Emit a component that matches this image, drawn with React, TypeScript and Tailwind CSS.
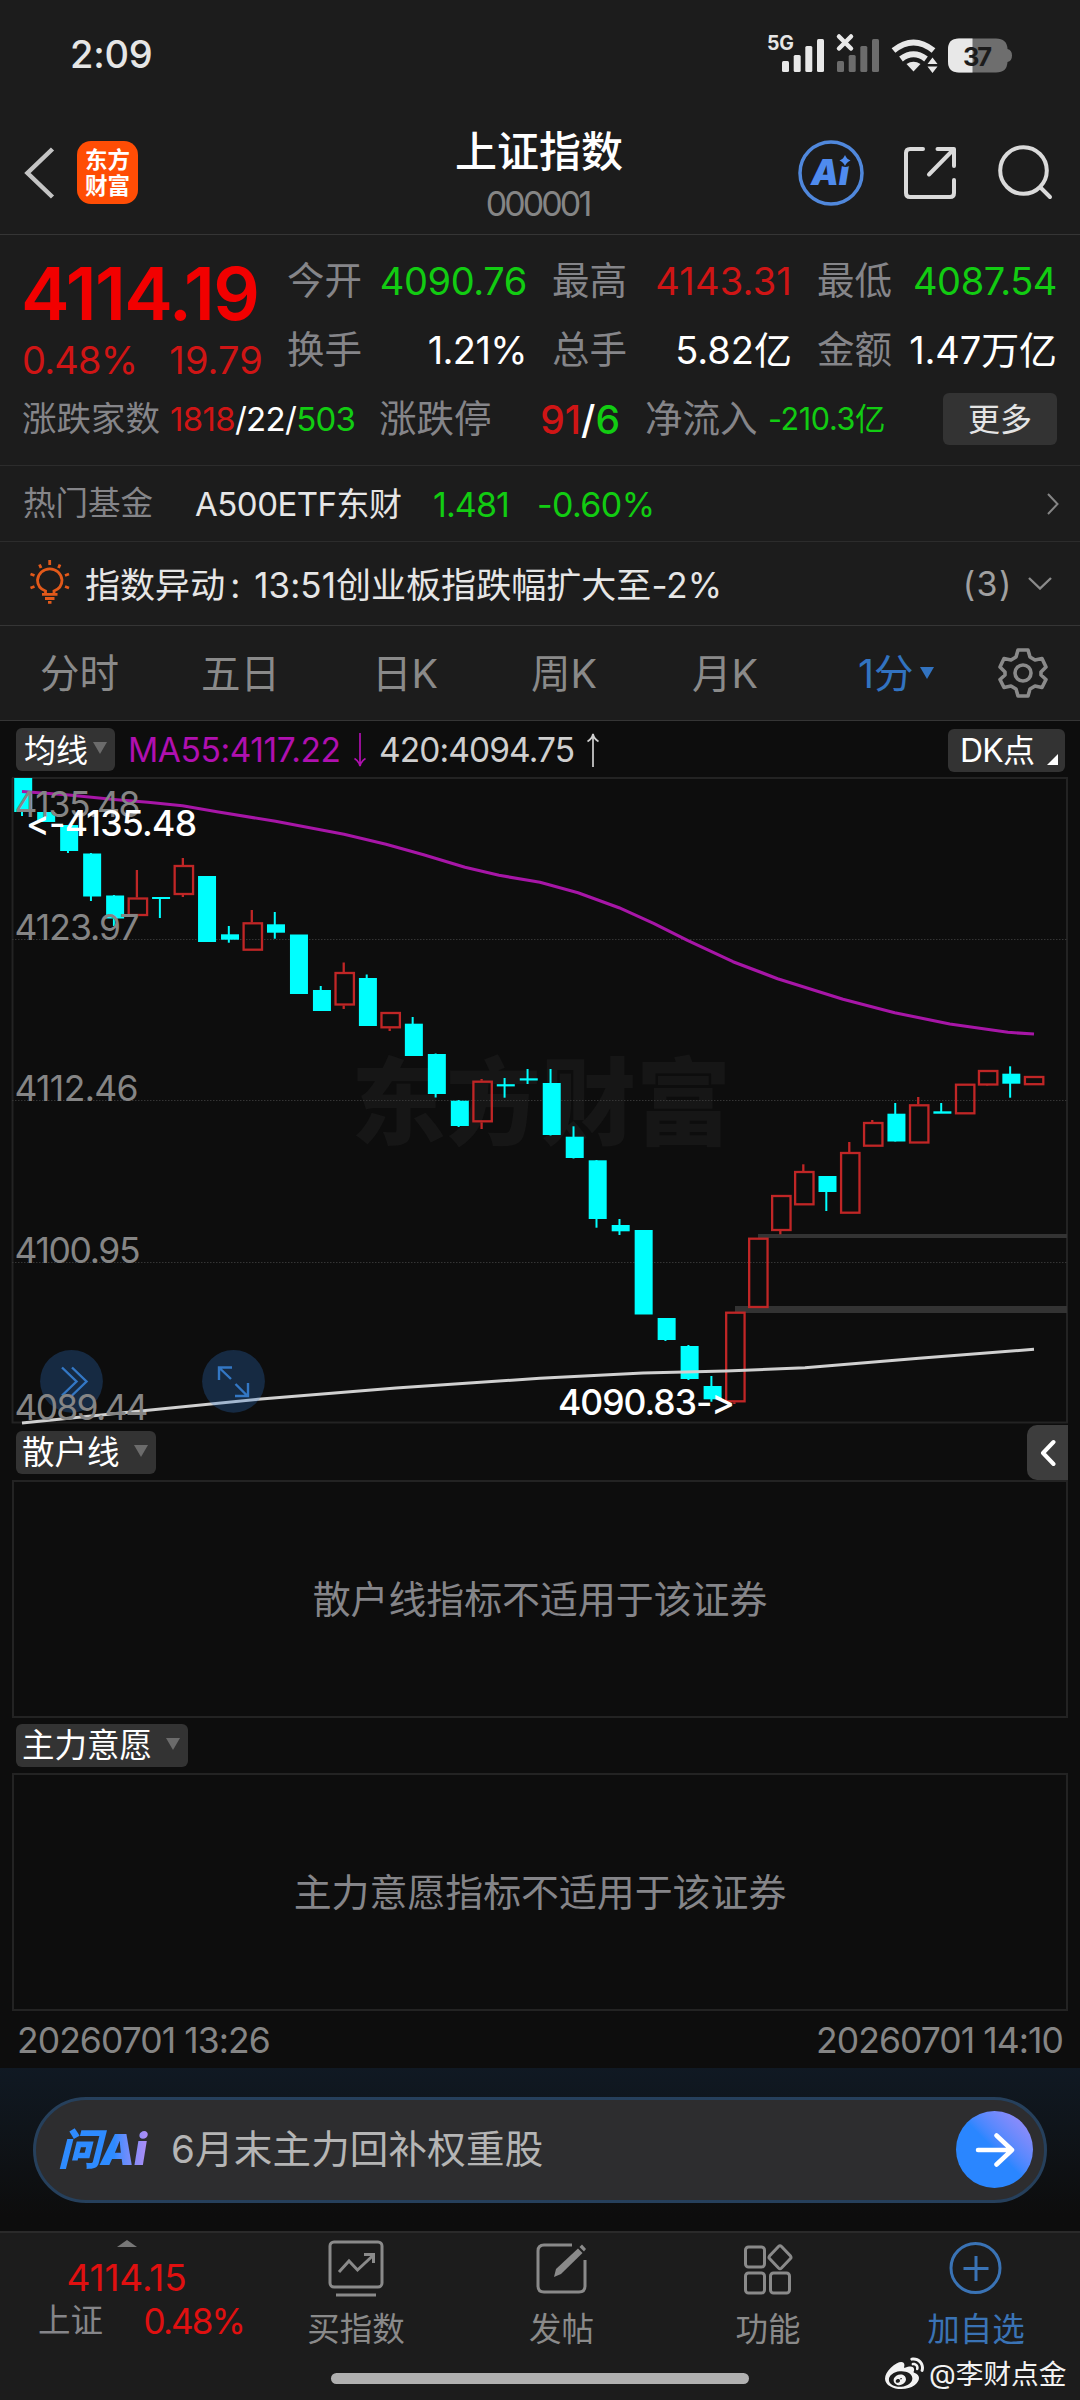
import { ReactNode } from "react";
import { FaWeibo } from "react-icons/fa";

type Candle = {
  up?: boolean;
  body: [number, number];
  wick?: [number, number];
};

const CANDLES: Candle[] = [
  { body: [778, 812], wick: [778, 816] },
  { body: [812, 822] },
  { body: [825, 851], wick: [825, 853] },
  { body: [853.5, 896.5], wick: [853, 901] },
  { body: [895.5, 918.5], wick: [895, 926] },
  { up: true, body: [897.5, 916], wick: [870, 916] },
  { body: [897, 899], wick: [897, 918] },
  { up: true, body: [865, 895], wick: [858, 897] },
  { body: [876, 942] },
  { body: [934.3, 939.7], wick: [926, 942.7] },
  { up: true, body: [922.3, 950.7], wick: [910, 950] },
  { body: [924.3, 932.7], wick: [912, 938.7] },
  { body: [934.5, 994] },
  { body: [990, 1011], wick: [986, 1011] },
  { up: true, body: [972, 1005.5], wick: [962.5, 1009] },
  { body: [978, 1026], wick: [974.5, 1026] },
  { up: true, body: [1012, 1028.3], wick: [1012, 1031] },
  { body: [1023.7, 1056], wick: [1017, 1056] },
  { body: [1054, 1094], wick: [1053.5, 1097.5] },
  { body: [1100.7, 1126], wick: [1100, 1127] },
  { up: true, body: [1080.7, 1122.3], wick: [1079, 1129] },
  { body: [1084.2, 1086.4], wick: [1078, 1097.7] },
  { body: [1078.3, 1080.5], wick: [1069, 1084] },
  { body: [1083, 1135], wick: [1069, 1135.5] },
  { body: [1136.7, 1158], wick: [1126.3, 1158.5] },
  { body: [1160.3, 1219], wick: [1160, 1227.7] },
  { body: [1225, 1231.3], wick: [1219, 1235] },
  { body: [1230, 1314.5] },
  { body: [1318, 1340], wick: [1318, 1341] },
  { body: [1346, 1379], wick: [1345, 1380] },
  { body: [1386, 1399.3], wick: [1376, 1401.7] },
  { up: true, body: [1311.7, 1402.3], wick: [1312, 1404] },
  { up: true, body: [1237.7, 1308] },
  { up: true, body: [1195, 1231], wick: [1195, 1234.3] },
  { up: true, body: [1171, 1205.3], wick: [1164.3, 1205] },
  { body: [1176, 1192], wick: [1176, 1211] },
  { up: true, body: [1152, 1213.7], wick: [1142, 1213] },
  { up: true, body: [1122, 1146.7], wick: [1120, 1146] },
  { body: [1113.7, 1141.5], wick: [1103, 1141.5] },
  { up: true, body: [1104.3, 1143.5], wick: [1097, 1143] },
  { body: [1111.3, 1113.7], wick: [1103, 1113] },
  { up: true, body: [1083.7, 1114.3] },
  { up: true, body: [1070, 1085.5], wick: [1070, 1086] },
  { body: [1073.7, 1083.7], wick: [1066.3, 1097.7] },
  { up: true, body: [1076, 1085.2] },
];

const MA55 =
  "22,791.5 69,795 114,799.5 148,802.3 182.5,805.7 217,811.7 275.5,821.3 344,834.3 386,844.3 423.6,854.7 465,867.3 499,875.3 540,882.3 578,892.7 619,907.7 653.6,923.3 688,940.7 733,961.7 777.6,978.7 843,999.3 894.7,1012.7 949.8,1024 1008,1032.3 1034,1034";
const MA420 =
  "22,1423 148,1410.3 258,1399.3 396,1388 540,1378.3 643,1373 726,1371 805,1367.7 919,1358.3 1034,1349.3";

const LABELS = [
  { text: "4135.48", y: 816.7, w: 126 },
  { text: "4123.97", y: 940, w: 125 },
  { text: "4112.46", y: 1101, w: 124 },
  { text: "4100.95", y: 1263, w: 126 },
  { text: "4089.44", y: 1420, w: 134 },
];

const Stick = ({ candle, index }: { candle: Candle; index: number }) => {
  const x = 14.2 + index * 22.98;
  const [top, bottom] = candle.body;
  const { wick, up } = candle;

  if (up) {
    return (
      <g stroke="#c02626" strokeWidth="2.3" fill="none">
        <rect x={x - 0.4} y={top + 1} width="18.4" height={bottom - top - 2} />
        {wick && wick[0] < top && <path d={`M${x + 7.8} ${wick[0]}V${top}`} />}
        {wick && wick[1] > bottom && <path d={`M${x + 7.8} ${bottom}V${wick[1]}`} />}
      </g>
    );
  }
  return (
    <g fill="#00ffff">
      <rect x={x} y={top} width="18" height={bottom - top} />
      {wick && <rect x={x + 6.8} y={wick[0]} width="2" height={wick[1] - wick[0]} />}
    </g>
  );
};

const KLineChart = () => (
  <svg className="block overflow-visible" width="1080" height="648" viewBox="0 777 1080 648">
    <text x="351" y="1138" fontSize="95" fontWeight="900" fill="#161616" textLength="380">
      东方财富
    </text>
    <path d="M12 778H1067V1422.5H12.5V778" fill="none" stroke="#232323" strokeWidth="2" />
    <g stroke="#353535" strokeDasharray="1.5 1.5">
      <path d="M12 939.5H1067" />
      <path d="M12 1100.5H1067" />
      <path d="M12 1262.5H1067" />
    </g>
    <path d="M758 1236H1067" stroke="#333" strokeWidth="4" />
    <path d="M735 1309.5H1067" stroke="#333" strokeWidth="7" />
    {CANDLES.map((candle, i) => (
      <Stick key={i} candle={candle} index={i} />
    ))}
    <polyline points={MA55} fill="none" stroke="#a716a7" strokeWidth="3.1" strokeLinejoin="round" />
    <polyline points={MA420} fill="none" stroke="#d0d0d0" strokeWidth="3" strokeLinejoin="round" />

    {/* floating chart controls */}
    <g fill="#2f77cc" fillOpacity="0.28">
      <circle cx="71.5" cy="1381.3" r="31.4" />
      <circle cx="233.5" cy="1381.3" r="31.4" />
    </g>
    <g fill="none" stroke="#3377c4" strokeWidth="2.4">
      <path d="M62 1367.5L76.5 1381.5L62 1395.5M72 1367.5L86.5 1381.5L72 1395.5" />
      <path d="M219 1380V1367.5H232M219.5 1368L231 1379M235.5 1384L247 1395.5M248 1383V1396H235" />
    </g>

    <g fontSize="35.5" fill="#858585">
      {LABELS.map((l) => (
        <text key={l.text} x="14.5" y={l.y} textLength={l.w}>
          {l.text}
        </text>
      ))}
    </g>
    <g fontSize="35.5" fontWeight="450" fill="#fff">
      <text x="26" y="836" textLength="171">
        &lt;-4135.48
      </text>
      <text x="558" y="1415" textLength="177">
        4090.83-&gt;
      </text>
    </g>
  </svg>
);

const Bars = ({ color }: { color: string }) => (
  <g fill={color}>
    <rect x="0" y="22" width="7" height="11" rx="1.5" />
    <rect x="11.7" y="16" width="7" height="17" rx="1.5" />
    <rect x="23.3" y="7" width="7" height="26" rx="1.5" />
    <rect x="35" y="0" width="7" height="33" rx="1.5" />
  </g>
);

const StatusBar = () => (
  <div className="flex h-[110px] items-center justify-between pl-[70px] pr-[68px]">
    <span className="pb-[2px] text-[38px] font-medium leading-none tracking-[-0.2px] text-[#e6e6e6]">2:09</span>
    <svg className="overflow-visible" width="246" height="44" viewBox="766 31 246 44">
      <text x="767" y="47.5" fontSize="19.5" fontWeight="700" fill="#e6e6e6" textLength="27">
        5G
      </text>
      <g transform="translate(782 37)">
        <Bars color="#e8e8e8" />
      </g>
      <g transform="translate(837 37)">
        <Bars color="#6c6c6c" />
      </g>
      <path d="M839 34.5L851 46.5M851 34.5L839 46.5" stroke="#e8e8e8" strokeWidth="4.5" strokeLinecap="round" />
      <g fill="none" stroke="#e8e8e8" strokeWidth="6">
        <path d="M893.5 48.5Q913.5 32.5 933.5 48.5" />
        <path d="M901 57Q913.5 47.5 926 57" />
      </g>
      <path d="M906.5 62Q913.5 57.5 920.5 62L913.5 69.5Z" fill="#e8e8e8" />
      <path d="M927.5 62L932.5 55.5L937.5 62ZM927.5 64.5H937.5L932.5 71Z" fill="#e8e8e8" />
      <path d="M959 36.5H996Q1007 36.5 1007.5 47Q1012 48 1012 53.5Q1012 59 1007.5 60Q1007 70.5 996 70.5H959Q948 70.5 948 59.5V47.5Q948 36.5 959 36.5Z" fill="#6e6e6e" />
      <path d="M972.5 36.5H959Q948 36.5 948 47.5V59.5Q948 70.5 959 70.5H972.5Z" fill="#e8e8e8" />
      <text x="963" y="63.5" fontSize="25.5" fontWeight="700" fill="#1c1c1c" textLength="29">
        37
      </text>
    </svg>
  </div>
);

const Header = () => (
  <header className="flex h-[125px] items-center justify-between border-b border-[#353535] pl-6 pr-[26px] pt-px">
    <div className="flex w-[300px] items-center gap-[22px]">
      <svg width="31" height="52" viewBox="0 0 31 52" fill="none" stroke="#c4c4c4" strokeWidth="4.5">
        <path d="M28.5 2L3.5 26L28.5 50" />
      </svg>
      <div className="flex h-[63px] w-[61px] flex-col items-center justify-center rounded-[14px] bg-[#ff4d05] text-[22.5px] font-bold leading-[26px] text-white">
        <span>东方</span>
        <span>财富</span>
      </div>
    </div>
    <div className="flex flex-col items-center pt-[7px]">
      <h1 className="text-[42px] font-medium leading-[52px] text-white">上证指数</h1>
      <p className="mr-[3px] pt-1 text-[34px] leading-[44px] tracking-[-2.9px] text-[#858585]">000001</p>
    </div>
    <svg width="256" height="68" viewBox="798 139 256 68" fill="none" className="ml-[44px]">
      <circle cx="831" cy="173" r="31" stroke="#5088dc" strokeWidth="3.5" />
      <text x="811" y="185" fontSize="35" fontWeight="900" fontStyle="italic" fill="#4f8bee" textLength="38">
        Ai
      </text>
      <circle cx="845.5" cy="160" r="7" fill="#1c1c1c" />
      <path d="M845 155Q846.5 159 850.5 160.500Q846.5 162 845 166Q843.5 162 839.5 160.500Q843.5 159 845 155Z" fill="#4f8bee" />
      <g stroke="#dadada" strokeWidth="4" strokeLinecap="round" strokeLinejoin="round">
        <path d="M923 149H910Q906 149 906 153V193Q906 197 910 197H950Q954 197 954 193V180" />
        <path d="M937.5 149H954V166M953.5 149.5L929 174.5" />
        <circle cx="1023.5" cy="170.5" r="23.3" />
        <path d="M1040.5 187.5L1050 197" />
      </g>
    </svg>
  </header>
);

const Quote = ({ label, children, className }: { label: string; children: ReactNode; className: string }) => (
  <div className="flex h-[69px] items-center justify-between leading-none">
    <span className="text-[37.5px] text-[#858589]">{label}</span>
    <span className={className}>{children}</span>
  </div>
);

const Quotes = () => (
  <section className="h-[231px] border-b border-[#2c2c2c] pl-[22px] pr-[23px] pt-[11px]">
    <div className="flex">
      <div className="flex w-[265px] flex-col leading-none">
        <span className="ml-[-1px] flex h-[92px] items-center pt-[2px] text-[73px] font-semibold tracking-[-1.6px] text-[#f20000]">
          4114.19
        </span>
        <div className="mt-[3px] flex h-[38px] w-[241px] items-center justify-between text-[38px] text-[#cf1515]">
          <span className="tracking-[-0.8px]">0.48%</span>
          <span className="tracking-[0.1px]">19.79</span>
        </div>
      </div>
      <div className="grid flex-1 grid-cols-3 gap-x-[25px]">
        <Quote label="今开" className="text-[38px] tracking-[-0.4px] text-[#12cc12]">4090.76</Quote>
        <Quote label="最高" className="text-[38px] tracking-[0.2px] text-[#cf1515]">4143.31</Quote>
        <Quote label="最低" className="text-[38px] tracking-[-0.4px] text-[#12cc12]">4087.54</Quote>
        <Quote label="换手" className="text-[38px] tracking-[-0.6px] text-white">1.21%</Quote>
        <Quote label="总手" className="text-[38px] text-white">5.82亿</Quote>
        <Quote label="金额" className="text-[38px] tracking-[-0.1px] text-white">1.47万亿</Quote>
      </div>
    </div>
    <div className="flex h-[70px] items-center leading-none">
      <div className="flex w-[357px] items-center">
        <span className="w-[148px] text-[34.5px] text-[#858589]">涨跌家数</span>
        <span className="text-[33px] tracking-[-0.7px] text-white">
          <span className="text-[#cf1515]">1818</span>/22/<span className="text-[#12cc12]">503</span>
        </span>
      </div>
      <div className="mr-[25px] flex w-[241px] items-center justify-between">
        <span className="text-[37.5px] text-[#858589]">涨跌停</span>
        <span className="text-[39px] font-[450] text-white">
          <span className="text-[#cf1515]">91</span>/<span className="text-[#12cc12]">6</span>
        </span>
      </div>
      <div className="flex w-[240px] items-center justify-between">
        <span className="text-[37.5px] text-[#858589]">净流入</span>
        <span className="text-[30.5px] tracking-[-0.4px] text-[#12cc12]">-210.3亿</span>
      </div>
      <button className="ml-auto flex h-[52px] w-[114px] items-center justify-center rounded-md bg-[#333] pt-px text-[32px] text-[#e4e4e4]">
        更多
      </button>
    </div>
  </section>
);

const FundRow = () => (
  <div className="flex h-[76px] items-center border-b border-[#2c2c2c] pl-[23px] pr-[21px] leading-none">
    <span className="w-[172px] pt-[2px] text-[32.5px] text-[#858589]">热门基金</span>
    <span className="w-[238px] pt-[2px] text-[33px] tracking-[-0.5px] text-[#e6e6e6]">A500ETF东财</span>
    <span className="w-[104px] pt-[2px] text-[34px] tracking-[-0.9px] text-[#12cc12]">1.481</span>
    <span className="pt-[2px] text-[34px] tracking-[-0.6px] text-[#12cc12]">-0.60%</span>
    <svg className="ml-auto" width="12" height="22" viewBox="0 0 12 22" fill="none" stroke="#858585" strokeWidth="2">
      <path d="M1 1L10.5 11L1 21" />
    </svg>
  </div>
);

const AlertRow = () => (
  <div className="flex h-[84px] items-center border-b border-[#353535] pl-[29px] pr-[28px] leading-none">
    <svg width="42" height="44" viewBox="0 0 42 44" fill="none" stroke="#e2591a" strokeWidth="2.8" className="mb-[3px] mr-[14px]">
      <path d="M16.5 33V31Q8.5 28 8.5 20A12.3 12.3 0 0 1 33 20Q33 28 25 31V33" />
      <path d="M13 34.3H28.5M16 38.5H25.5M19 42.3H22.5" />
      <path d="M20.7 0V5M10.5 4.5L12 8M31 4.500L29.5 8M1.5 14L5.5 15.500M40 14L36 15.5M1.5 28L5.5 26.5M40 28L36 26.5" />
    </svg>
    <span className="pt-[3px] text-[35px] tracking-[0.05px] text-[#e6e6e6]">
      指数异动<span className="pl-[5px] pr-[4px]">:</span> 13:51创业板指跌幅扩大至-2%
    </span>
    <span className="ml-auto pt-px text-[34px] tracking-[1.500px] text-[#a0a0a0]">(3)</span>
    <svg className="ml-[15px]" width="24" height="13" viewBox="0 0 24 13" fill="none" stroke="#8a8a8a" strokeWidth="2.4">
      <path d="M1 1L12 11.5L23 1" />
    </svg>
  </div>
);

const Tabs = () => (
  <nav className="flex h-[95px] items-center border-b border-[#353535] bg-[#1c1c1c] pl-[40px] text-[39.5px] leading-none text-[#8a8a8a]">
    <span className="w-[161px] pt-1">分时</span>
    <span className="w-[171px] pt-1">五日</span>
    <span className="w-[159px] pt-1">日K</span>
    <span className="w-[161px] pt-1">周K</span>
    <span className="w-[166px] pt-1">月K</span>
    <span className="w-[62px] pt-1 text-[#3273c0]">1分</span>
    <svg width="14" height="12" viewBox="0 0 14 12" className="mb-px">
      <path d="M0 0H14L7 12Z" fill="#3273c0" />
    </svg>
    <svg className="ml-[64px]" width="50" height="50" viewBox="0 0 50 50" fill="none" stroke="#8a8a8a" strokeWidth="3.6" strokeLinejoin="round">
      <path d="M20 2H30L32 9L37 12L44 10.5L48 19L43 24V27L48 31.5L44 39.5L37 38L32 41L30 48H20L18 41L13 38L6 39.5L2 31.5L7 27V24L2 19L6 10.5L13 12L18 9Z" />
      <circle cx="25" cy="25" r="8" />
    </svg>
  </nav>
);

const Arrow = ({ color, down }: { color: string; down?: boolean }) => (
  <svg width="12" height="34" viewBox="0 0 12 34" fill="none" stroke={color} strokeWidth="1.7" className={down ? "mt-px rotate-180" : "mt-px"}>
    <path d="M6 1V34M0.5 8.5Q5 6 6 1Q7 6 11.5 8.5" />
  </svg>
);

const Caret = () => (
  <svg width="14" height="12" viewBox="0 0 14 12" className="mb-[5px]">
    <path d="M0 0H14L7 12Z" fill="#6b6b6b" />
  </svg>
);

const Legend = () => (
  <div className="flex h-[56px] items-center pl-4 pr-[15px] leading-none">
    <div className="mt-px flex h-[43px] w-[99px] items-center gap-[5px] rounded-md bg-[#333] pl-[8px] pt-[2px] text-[32px] text-white">
      均线
      <Caret />
    </div>
    <span className="ml-[13px] w-[226px] pt-[3px] text-[33.5px] tracking-[-0.4px] text-[#b010b0]">MA55:4117.22</span>
    <Arrow color="#b010b0" down />
    <span className="ml-[13px] w-[208px] pt-[3px] text-[33.5px] tracking-[-0.9px] text-[#cfcfcf]">420:4094.75</span>
    <Arrow color="#cfcfcf" />
    <div className="ml-auto mt-[2px] flex h-[43px] w-[117px] items-center justify-between rounded-md bg-[#333] pl-[12px] pr-[7px] pt-px text-[32px] tracking-[-0.8px] text-white">
      DK点
      <svg width="11" height="11" viewBox="0 0 11 11" className="mt-[17px]">
        <path d="M11 0V11H0Z" fill="#fff" />
      </svg>
    </div>
  </div>
);

const IndicatorPane = ({ name, message, action }: { name: string; message: string; action?: ReactNode }) => (
  <section>
    <div className="flex h-[55px] items-center justify-between pl-4 pr-[12px]">
      <div className="flex h-[43px] items-center gap-[14px] rounded-md bg-[#333] pl-[6px] pr-[8px] pt-[2px] text-[32.5px] leading-none text-white">
        {name}
        <Caret />
      </div>
      {action}
    </div>
    <div className="mx-[12px] flex h-[238px] items-center justify-center border-2 border-[#232323] text-[37.9px] text-[#858589]">
      {message}
    </div>
  </section>
);

const AskBar = () => (
  <section className="flex h-[163px] items-center bg-linear-to-b from-[#101923] to-[#0d0d0d] to-90% px-[33px]">
    <div className="flex h-[106px] w-full items-center rounded-full border-[3px] border-[#26405c] bg-[#2d2d2f] pl-[22px] pr-[11px] leading-none">
      <span className="w-[113px] bg-linear-to-r from-[#2e8bff] from-50% to-[#b08cf5] to-80% bg-clip-text text-[43px] font-black italic tracking-[-0.5px] text-transparent">
        问Ai
      </span>
      <span className="text-[38.5px] tracking-[0.2px] text-[#b5b5b5]">6月末主力回补权重股</span>
      <button className="ml-auto flex size-[77px] items-center justify-center rounded-full bg-linear-to-tr from-[#2a86ff] from-50% to-[#a48cf8]">
        <svg width="40" height="36" viewBox="0 0 40 36" fill="none" stroke="#fff" strokeWidth="4.5" strokeLinecap="round" strokeLinejoin="round">
          <path d="M3 18H36M21.5 3.5L37 18L21.5 32.5" />
        </svg>
      </button>
    </div>
  </section>
);

const NavItem = ({ label, className, children }: { label: string; className: string; children: ReactNode }) => (
  <div className={className}>
    <svg width="56" height="60" viewBox="0 0 56 60" fill="none" stroke="currentColor" strokeWidth="3">
      {children}
    </svg>
    <span className="mt-[11px] text-[32.5px] leading-[40px]">{label}</span>
  </div>
);

const BottomNav = () => (
  <footer className="relative h-[169px] border-t-2 border-[#2a2a2a] bg-[#1c1c1c]">
    <div className="flex">
      <div className="flex w-[253px] flex-col items-center pt-[7px] leading-none">
        <svg width="20" height="7" viewBox="0 0 20 7">
          <path d="M0 7H20L10 0Z" fill="#777" />
        </svg>
        <span className="mt-[12px] text-[37px] tracking-[-0.1px] text-[#e01010]">4114.15</span>
        <div className="ml-[29px] mt-[8px] flex w-[206px] items-center justify-between">
          <span className="text-[32.5px] text-[#858589]">上证</span>
          <span className="text-[35px] tracking-[-1.9px] text-[#e01010]">0.48%</span>
        </div>
      </div>
      <NavItem label="买指数" className="flex w-[206px] flex-col items-center pt-[6px] text-[#8a8a8a]">
        <rect x="2" y="3" width="52" height="45" rx="4" />
        <path d="M11 33L21 22L29.5 31L45 16.5M36 15.5H45.5V24M8 56H48" />
      </NavItem>
      <NavItem label="发帖" className="flex w-[205px] flex-col items-center pt-[6px] text-[#8a8a8a]">
        <path d="M38 6H10Q4 6 4 12V47Q4 53 10 53H45Q51 53 51 47V21" />
        <path d="M20 38L22 30L44 9.5L48.5 14L27 35Z" fill="currentColor" stroke="none" />
        <path d="M45.5 8L48 5.5L52 10L50 12.5Z" fill="currentColor" stroke="none" />
      </NavItem>
      <NavItem label="功能" className="flex w-[208px] flex-col items-center pt-[6px] text-[#8a8a8a]">
        <rect x="5.5" y="8" width="19" height="20" rx="3" />
        <rect x="5.5" y="34" width="19" height="20" rx="3" />
        <rect x="30.5" y="34" width="19" height="20" rx="3" />
        <path d="M38.5 7.5Q40 6 41.5 7.5L50.5 17Q51.5 18.5 50.5 19.5L41.5 29Q40 30.5 38.5 29L29.5 19.5Q28.5 18.5 29.5 17Z" />
      </NavItem>
      <NavItem label="加自选" className="flex w-[208px] flex-col items-center pt-[6px] text-[#3a73b5]">
        <circle cx="27.5" cy="29" r="24.5" />
        <path d="M28 17V42M15.5 29.5H40.5" />
      </NavItem>
    </div>
    <div className="absolute left-[331px] top-[140px] h-[11px] w-[418px] rounded-full bg-[#b0b0b0]" />
    <div className="absolute left-[885px] top-[121px] flex items-center gap-[5px] text-[27.7px] leading-[40px] text-[#f2f2f2]">
      <FaWeibo className="size-[39px]" />
      @李财点金
    </div>
  </footer>
);

const App = () => {
  return (
    <div className="h-[2400px] w-[1080px] overflow-hidden bg-[#1c1c1c] font-['Inter','Noto_Sans_CJK_SC',sans-serif] [font-feature-settings:'calt'_0]">
      <StatusBar />
      <Header />
      <Quotes />
      <FundRow />
      <AlertRow />
      <Tabs />
      <main className="h-[1347px] bg-[#0d0d0d]">
        <Legend />
        <KLineChart />
        <IndicatorPane
          name="散户线"
          message="散户线指标不适用于该证券"
          action={
            <button className="flex h-[55px] w-[41px] items-center justify-center rounded-l-[10px] bg-[#3d3d3d]">
              <svg width="16" height="28" viewBox="0 0 16 28" fill="none" stroke="#fff" strokeWidth="4" strokeLinecap="round" strokeLinejoin="round">
                <path d="M13.5 3L3 14L13.5 25" />
              </svg>
            </button>
          }
        />
        <IndicatorPane name="主力意愿" message="主力意愿指标不适用于该证券" />
        <div className="flex h-[59px] items-center justify-between pl-[17px] pr-[17px] text-[35.5px] tracking-[-0.95px] text-[#858585]">
          <span>20260701 13:26</span>
          <span>20260701 14:10</span>
        </div>
      </main>
      <AskBar />
      <BottomNav />
    </div>
  );
};

export default App;
